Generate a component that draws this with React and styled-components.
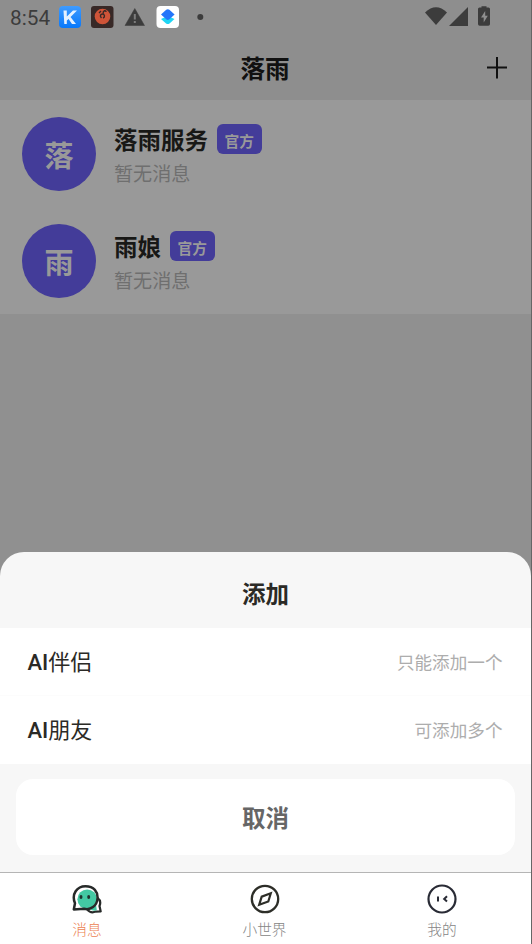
import React, { useState } from 'react';
import styled, { createGlobalStyle } from 'styled-components';

const GlobalStyle = createGlobalStyle`
    * {
        box-sizing: border-box;
    }
    body {
        margin: 0;
        background: #666;
        font-family: Roboto, 'Noto Sans CJK SC', sans-serif;
    }
    button {
        border: 0;
        padding: 0;
        background: none;
        font-family: inherit;
    }
`;

const Screen = styled.main`
    width: 531px;
    height: 944px;
    display: flex;
    flex-direction: column;
    overflow: hidden;
    background: #909090;
`;

const StatusBar = styled.div`
    height: 34px;
    flex: none;
    display: flex;
    align-items: center;
    justify-content: space-between;
    padding: 0 40px 0 10px;
    background: #8e8e8e;
    color: #3c3c3c;
`;

const StatusGroup = styled.div`
    display: flex;
    align-items: center;
`;

const Clock = styled.span`
    width: 49px;
    font-size: 20.8px;
    line-height: 34px;
    padding-top: 1px;
`;

const TopBar = styled.header`
    height: 66px;
    flex: none;
    display: grid;
    grid-template-columns: 1fr auto 1fr;
    align-items: center;
    padding: 1px 22px 0 21px;
    background: #8e8e8e;

    h1 {
        grid-column: 2;
        margin: 0;
        padding-top: 5px;
        font-size: 24.6px;
        line-height: 36px;
        font-weight: 700;
        color: #111;
    }
    button {
        justify-self: end;
        height: 24px;
    }
    svg {
        display: block;
    }
`;

const ChatList = styled.section`
    flex: none;
    background: #999;
`;

const ChatRow = styled.article`
    height: 107px;
    display: flex;
    align-items: center;
    gap: 18px;
    padding: 0 22px;
`;

const Avatar = styled.div`
    width: 74px;
    height: 74px;
    border-radius: 50%;
    display: flex;
    align-items: center;
    justify-content: center;
    background: #433c99;
    color: #999;
    font-size: 29px;
    font-weight: 700;
`;

const ChatInfo = styled.div`
    display: flex;
    flex-direction: column;
    padding-top: 3px;
`;

const ChatName = styled.div`
    height: 32px;
    display: flex;
    align-items: center;
    gap: 9px;
    font-size: 23.5px;
    font-weight: 700;
    color: #181816;

    span:first-child {
        padding-top: 1px;
    }
`;

const Badge = styled.span`
    width: 44.5px;
    height: 30px;
    padding-top: 4px;
    border-radius: 6px;
    background: #433c99;
    color: #999;
    font-size: 14.7px;
    line-height: 28px;
    text-align: center;
`;

const LastMessage = styled.p`
    margin: 7px 0 0;
    font-size: 19.1px;
    line-height: 26px;
    color: #6f6f6f;
`;

const SheetArea = styled.div`
    flex: 1;
    display: flex;
    flex-direction: column;
`;

const Sheet = styled.section`
    height: 320.5px;
    flex: none;
    margin-top: auto;
    border-radius: 24px 24px 0 0;
    overflow: hidden;
    background: #f7f7f7;
`;

const SheetTitle = styled.h2`
    margin: 0;
    height: 76.5px;
    padding-top: 9.5px;
    font-size: 23.5px;
    line-height: 68px;
    font-weight: 700;
    text-align: center;
    color: #2b2a26;
`;

const Option = styled.button`
    width: 100%;
    height: 68px;
    display: flex;
    align-items: center;
    justify-content: space-between;
    padding: 0 28.5px 3px 27.5px;
    background: #fff;
    border-bottom: 1px solid ${(props) => (props.$last ? '#fff' : '#fcfcfc')};
    color: #2b2a26;
    font-size: 22px;

    b {
        font-weight: 500;
    }
    small {
        padding-top: 2px;
        font-size: 17.6px;
        color: #adadad;
    }
`;

const CancelButton = styled.button`
    display: block;
    width: 499px;
    height: 76px;
    margin: 15px 16px 0;
    border-radius: 17px;
    background: #fff;
    color: #666;
    font-size: 23.5px;
    font-weight: 700;
`;

const TabBar = styled.nav`
    height: 72px;
    flex: none;
    display: grid;
    grid-template-columns: repeat(3, 177.5px);
    border-top: 1px solid #b5b5b5;
    background: #fff;
`;

const Tab = styled.button`
    display: flex;
    flex-direction: column;
    align-items: center;
    padding: 11px 3.5px 0 0;
    font-size: 14.7px;
    font-weight: 300;
    line-height: 20px;
    color: ${(props) => (props.$active ? '#ec7f52' : '#858585')};

    svg {
        display: block;
        margin-bottom: 6px;
    }
`;

function NotificationIcons() {
    return (
        <svg width="150" height="24" viewBox="0 0 150 24">
            <defs>
                <linearGradient id="blueTile" x1="0" y1="0" x2="0" y2="1">
                    <stop offset="0" stopColor="#3f9bff" />
                    <stop offset="1" stopColor="#0878fa" />
                </linearGradient>
            </defs>
            <rect x="0" y="1" width="22" height="22" rx="4" fill="url(#blueTile)" />
            <path d="M4.5 5.500h3.300v6L14 5.500h4l-6.500 6.500 5.500 7h-4L9.600 14l-1.800 1.500V19H5.300z" fill="#e5f1ff" />
            <rect x="32" y="1" width="22.5" height="22" rx="3" fill="#382927" />
            <circle cx="43.5" cy="11.5" r="7.800" fill="#cf5438" />
            <path
                d="M42.5 13c-2-2-1-4 1-4s3 3 .5 4M44 9c0-4 3-4 3-2M40 8l2-2"
                fill="none"
                stroke="#382927"
                strokeWidth="1.4"
            />
            <path d="M75.8 3.500 85.500 20.500h-19.500z" fill="#3c3c3c" strokeLinejoin="round" stroke="#3c3c3c" strokeWidth=".5" />
            <path d="M75.8 9v5.500M75.800 16v2" stroke="#7c7c7c" strokeWidth="2" />
            <rect x="97.5" y="1" width="22.5" height="22" rx="4" fill="#fff" />
            <path d="M102 14l6.800-3 6.700 3-5 4.500q-1.700 1.200-3.400 0z" fill="#1fd5f4" />
            <path d="M102 9.500l5.200-4.700q1.600-1.100 3.200 0l5.200 4.700-5.200 4.800q-1.600 1.200-3.200 0z" fill="#2475fa" />
            <circle cx="141.3" cy="12" r="3" fill="#3c3c3c" />
        </svg>
    );
}

function SystemIcons() {
    return (
        <svg width="66" height="22" viewBox="0 0 66 22" fill="#3c3c3c">
            <path d="M0 6.500Q11 -4 22 6.500L11 19z" />
            <path d="M24 20 43 1v19z" />
            <path d="M56.500 1.500V.3h5v1.200h2q1.500 0 1.500 1.500v15q0 1.700-1.700 1.700h-8.600Q53 19.700 53 18V3q0-1.500 1.500-1.500z" />
            <path d="M60.200 5l-4.200 6.500h2.700v5l4.100-6.800h-2.600z" fill="#8e8e8e" />
        </svg>
    );
}

function PlusIcon() {
    return (
        <svg width="24" height="24" viewBox="0 0 24 24" stroke="#111" strokeWidth="2">
            <path d="M2 11.500h20M12 1v21.500" />
        </svg>
    );
}

function MessageIcon() {
    return (
        <svg width="32" height="30" viewBox="0 0 32 30" strokeLinejoin="round">
            <path
                d="M26.500 14c2.800 2 3.300 5 2 8l1.200 5.500-5 .1c-3 1.200-6.500.3-8.500-2.300z"
                fill="#fff"
                stroke="#272a29"
                strokeWidth="2.2"
            />
            <path d="M18.500 24.500l6.500-4 .8 5.800q-4 1.500-7.300-1.800z" fill="#43c9a3" />
            <path
                d="M2.800 25.500l1.200-6.300C.2 10 6 2.200 14.500 2.200S27 8 26.500 14.500c-.5 7.500-7 12-13.500 10.200z"
                fill="#fff"
            />
            <circle cx="16.200" cy="15.200" r="9.800" fill="#43c9a3" />
            <path
                d="M2.800 25.500l1.200-6.300C.2 10 6 2.200 14.500 2.200S27 8 26.500 14.500c-.5 7.500-7 12-13.500 10.200z"
                fill="none"
                stroke="#272a29"
                strokeWidth="2.500"
            />
            <ellipse cx="10" cy="13" rx="1.500" ry="2" fill="#20332e" />
            <ellipse cx="17.700" cy="13" rx="1.500" ry="2" fill="#20332e" />
        </svg>
    );
}

function CompassIcon() {
    return (
        <svg width="32" height="30" viewBox="0 0 32 30" fill="none" stroke="#2d2e28">
            <circle cx="16" cy="15" r="13.200" strokeWidth="2.300" />
            <path d="M21.800 9.200l-2.500 8.300-9.100 3.300 2.500-8.200z" strokeWidth="2.200" />
        </svg>
    );
}

function FaceIcon() {
    return (
        <svg width="32" height="30" viewBox="0 0 32 30" fill="none" stroke="#292b35">
            <circle cx="16" cy="15" r="13.500" strokeWidth="2.200" />
            <path d="M12 12.500v5M21 12.300l-2.800 2.600 2.800 2.500" strokeWidth="2" />
        </svg>
    );
}

const chats = [
    { avatar: '落', name: '落雨服务' },
    { avatar: '雨', name: '雨娘' },
];

const tabs = [
    { label: '消息', Icon: MessageIcon },
    { label: '小世界', Icon: CompassIcon },
    { label: '我的', Icon: FaceIcon },
];

function App() {
    const [activeTab, setActiveTab] = useState('消息');

    return (
        <>
            <GlobalStyle />
            <Screen>
                <StatusBar>
                    <StatusGroup>
                        <Clock>8:54</Clock>
                        <NotificationIcons />
                    </StatusGroup>
                    <SystemIcons />
                </StatusBar>
                <TopBar>
                    <h1>落雨</h1>
                    <button type="button" aria-label="添加">
                        <PlusIcon />
                    </button>
                </TopBar>
                <ChatList>
                    {chats.map((chat) => (
                        <ChatRow key={chat.name}>
                            <Avatar>{chat.avatar}</Avatar>
                            <ChatInfo>
                                <ChatName>
                                    <span>{chat.name}</span>
                                    <Badge>官方</Badge>
                                </ChatName>
                                <LastMessage>暂无消息</LastMessage>
                            </ChatInfo>
                        </ChatRow>
                    ))}
                </ChatList>
                <SheetArea>
                    <Sheet>
                        <SheetTitle>添加</SheetTitle>
                        <Option type="button">
                            <span>
                                <b>AI</b>伴侣
                            </span>
                            <small>只能添加一个</small>
                        </Option>
                        <Option type="button" $last>
                            <span>
                                <b>AI</b>朋友
                            </span>
                            <small>可添加多个</small>
                        </Option>
                        <CancelButton type="button">取消</CancelButton>
                    </Sheet>
                </SheetArea>
                <TabBar>
                    {tabs.map(({ label, Icon }) => (
                        <Tab
                            key={label}
                            type="button"
                            $active={label === activeTab}
                            onClick={() => setActiveTab(label)}
                        >
                            <Icon />
                            {label}
                        </Tab>
                    ))}
                </TabBar>
            </Screen>
        </>
    );
}

export default App;
